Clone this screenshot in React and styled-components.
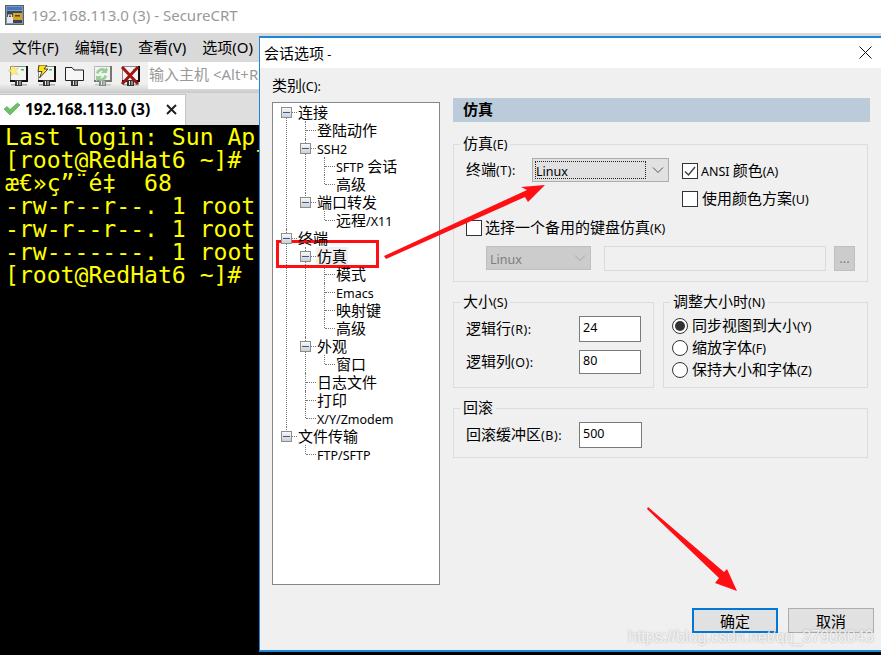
import React from 'react';
import styled, { createGlobalStyle } from 'styled-components';

const GlobalStyle = createGlobalStyle`
    html, body { margin: 0; padding: 0; background: #000; }
    body {
        font-family: "Noto Sans CJK SC", "Noto Sans", sans-serif;
        font-size: 15px;
        color: #000;
    }
    * { box-sizing: border-box; }
`;

const LATIN_FONT = '"Noto Sans", "Open Sans", sans-serif';

const Lat = styled.span`
    font-family: ${LATIN_FONT};
    font-size: 12.5px;
`;

const Screen = styled.div`
    position: relative;
    width: 881px;
    height: 655px;
    overflow: hidden;
    display: flex;
    flex-direction: column;
    background: #000;
`;

/* main window */
const TitleBar = styled.div`
    height: 33px;
    background: #fff;
    display: flex;
    align-items: center;
    gap: 7px;
    padding: 0 0 3px 5px;
    color: #999;
    font-family: ${LATIN_FONT};
    font-size: 15px;
`;

const MenuBar = styled.div`
    height: 29px;
    background: #d9d9d9;
    display: flex;
    align-items: center;
    gap: 16px;
    padding: 0 0 3px 12px;

    ${Lat} { font-size: 15px; }
`;

const ToolBar = styled.div`
    height: 31px;
    background: linear-gradient(#f0f0f0, #f0f0f0 70%, #c9c9c9);
    display: flex;
    align-items: flex-start;
    padding: 3px 0 0 8px;
    gap: 7px;
`;

const HostInput = styled.div`
    margin-left: 0;
    margin-top: -3px;
    width: 115px;
    height: 27px;
    background: #fff;
    color: #999;
    white-space: nowrap;
    overflow: hidden;
    line-height: 24px;
    padding-left: 1px;

    ${Lat} { font-size: 15px; }
`;

const TabStrip = styled.div`
    height: 32px;
    background: #dedede;
    display: flex;
    align-items: flex-end;
`;

const Tab = styled.div`
    width: 186px;
    height: 31px;
    background: #fff;
    border: 1px solid #c4c4c4;
    border-left: 0;
    border-bottom: 0;
    display: flex;
    align-items: center;
    padding: 0 8px 2px 3px;
    gap: 4px;
    font-family: ${LATIN_FONT};
    font-weight: 700;
    font-size: 15.5px;
`;

const TabLabel = styled.span`
    flex: 1;
    white-space: nowrap;
`;

const Terminal = styled.pre`
    flex: 1;
    margin: 0;
    padding: 1px 0 0 5px;
    background: #000;
    color: #ffff00;
    font-family: "DejaVu Sans Mono", monospace;
    font-size: 23.1px;
    line-height: 23px;
    overflow: hidden;
`;

/* dialog */
const Dialog = styled.div`
    position: absolute;
    left: 259px;
    top: 36px;
    width: 622px;
    height: 616px;
    background: #f0f0f0;
    border: 1px solid #1e86d6;
    border-right: 0;
    border-top-width: 2px;
    border-bottom-width: 2px;
    display: flex;
    flex-direction: column;
`;

const DialogTitle = styled.div`
    height: 30px;
    flex: none;
    background: #fff;
    display: flex;
    align-items: center;
    justify-content: space-between;
    padding: 0 9px 2px 4px;
`;

const DialogBody = styled.div`
    display: flex;
    gap: 13px;
    padding-left: 12px;
`;

const LeftColumn = styled.div`
    width: 168px;
    padding-top: 7px;
`;

const CategoryLabel = styled.div`
    height: 27px;
    line-height: 20px;
`;

const TreeBox = styled.div`
    height: 483px;
    background: #fff;
    border: 1px solid #828790;
    padding: 0 0 0 13px;
`;

const TreeList = styled.ul`
    list-style: none;
    margin: 0 0 0 ${p => (p.$root ? '0' : '7px')};
    padding: 0;
`;

const TreeItem = styled.li`
    position: relative;
    padding-left: 12px;

    &::before {
        content: '';
        position: absolute;
        left: 0;
        top: ${p => (p.$first ? '9px' : '0')};
        bottom: 0;
        border-left: 1px dotted #777;
    }
    &:last-child::before {
        bottom: auto;
        height: ${p => (p.$first ? '0' : '9px')};
    }
    &::after {
        content: '';
        position: absolute;
        left: 1px;
        top: 9px;
        width: 10px;
        border-top: 1px dotted #777;
    }
`;

const TreeLabel = styled.div`
    height: 18px;
    line-height: 18px;
    white-space: nowrap;
    position: relative;
    z-index: 1;
`;

const Selected = styled.span`
    display: inline-block;
    background: #f0f0f0;
    margin-left: -1px;
    padding: 0 1px;
`;

const Expander = styled.span`
    position: absolute;
    z-index: 2;
    left: -5px;
    top: 4px;
    width: 11px;
    height: 11px;
    border: 1px solid #8d8d8d;
    background: linear-gradient(#f8f8f8, #cfcfcf);

    &::after {
        content: '';
        position: absolute;
        left: 1px;
        right: 1px;
        top: 4px;
        height: 1px;
        background: #2f5aa8;
    }
`;

const RightColumn = styled.div`
    width: 417px;
    padding-top: 30px;
`;

const PanelHeader = styled.div`
    height: 24px;
    background: #bccbd9;
    line-height: 22px;
    padding-left: 10px;
    font-weight: 700;
    margin-bottom: 12px;
`;

const Group = styled.fieldset`
    margin: 0 0 10px;
    width: ${p => p.$width || '415px'};
    height: ${p => p.$height};
    min-width: 0;
    border: 1px solid #dcdcdc;
    padding: 0 ${p => p.$inset}px;

    legend {
        height: 20px;
        line-height: 18px;
        padding: 0 3px;
        margin-left: ${p => 6 - p.$inset}px;
    }
`;

const GroupPair = styled.div`
    display: flex;
    gap: 9px;
`;

const TerminalRow = styled.div`
    display: flex;
    padding-top: 4px;
`;

const FieldLabel = styled.div`
    width: ${p => p.$width}px;
    height: ${p => p.$height || 24}px;
    flex: none;
    line-height: ${p => (p.$height || 24) - 2}px;
    white-space: nowrap;

    ${Lat} { letter-spacing: 0.5px; }
`;

const Select = styled.div`
    position: relative;
    width: ${p => p.$width}px;
    height: 24px;
    flex: none;
    background: ${p => (p.$disabled ? '#cccccc' : '#e1e1e1')};
    border: 1px solid ${p => (p.$disabled ? '#bfbfbf' : '#adadad')};
    color: ${p => (p.$disabled ? '#7d7d7d' : '#000')};
    line-height: 21px;
    padding-left: 3px;

    svg {
        position: absolute;
        right: 4px;
        top: 6px;
    }
`;

const FocusRing = styled.div`
    width: 111px;
    height: 18px;
    margin: 2px 0 0 -1px;
    border: 1px dotted #222;
    line-height: 15px;
`;

const CheckColumn = styled.div`
    margin-left: 13px;
    display: flex;
    flex-direction: column;
    margin-top: -1px;
`;

const CheckRow = styled.div`
    display: flex;
    align-items: center;
    height: ${p => p.$height || 28}px;
    gap: ${p => p.$gap || 4}px;
    line-height: 20px;
`;

const CheckBox = styled.span`
    width: 16px;
    height: 16px;
    flex: none;
    background: #fff;
    border: 1px solid #333;
    display: flex;
    align-items: center;
    justify-content: center;
`;

const Radio = styled.span`
    width: 16px;
    height: 16px;
    flex: none;
    border-radius: 50%;
    background: #fff;
    border: 1px solid #333;
    display: flex;
    align-items: center;
    justify-content: center;

    &::after {
        content: '';
        width: 10px;
        height: 10px;
        border-radius: 50%;
        background: ${p => (p.$on ? '#333' : 'transparent')};
    }
`;

const AltRow = styled.div`
    display: flex;
    align-items: flex-start;
    margin: 3px 0 0 20px;
`;

const AltInput = styled.div`
    width: 222px;
    height: 25px;
    margin-left: 13px;
    background: #f0f0f0;
    border: 1px solid #dadada;
`;

const DotsButton = styled.div`
    width: 21px;
    height: 25px;
    margin-left: 8px;
    background: #cccccc;
    border: 1px solid #bfbfbf;
    color: #7d7d7d;
    text-align: center;
    line-height: 22px;
    font-family: ${LATIN_FONT};
    font-size: 13px;
`;

const FieldRow = styled.div`
    display: flex;
    align-items: flex-start;
    margin-top: ${p => p.$top}px;
`;

const NumberBox = styled.div`
    width: 63px;
    height: ${p => p.$height}px;
    background: #fff;
    border: 1px solid #7a7a7a;
    padding-left: 3px;
    line-height: ${p => p.$height - 4}px;
    font-family: ${LATIN_FONT};
    font-size: 12.5px;
`;

const RadioColumn = styled.div`
    padding-top: 3px;
`;

const Footer = styled.div`
    display: flex;
    justify-content: flex-end;
    gap: 10px;
    padding: 23px 7px 0 0;
`;

const Button = styled.div`
    width: 86px;
    height: 25px;
    background: #e1e1e1;
    border: ${p => (p.$primary ? '2px solid #0078d7' : '1px solid #adadad')};
    display: flex;
    align-items: center;
    justify-content: center;
`;

/* annotations drawn on top of the screenshot */
const RedBox = styled.div`
    position: absolute;
    left: 276px;
    top: 240px;
    width: 103px;
    height: 28px;
    border: 3px solid #ff0f14;
`;

const Arrows = styled.svg`
    position: absolute;
    left: 0;
    top: 0;
    pointer-events: none;
`;

const Watermark = styled.div`
    position: absolute;
    left: 628px;
    top: 626px;
    color: rgba(255, 255, 255, 0.8);
    text-shadow: 0 0 2px rgba(110, 110, 110, 0.55);
    font-family: "Liberation Sans", sans-serif;
    font-size: 16px;
    line-height: 22px;
    white-space: nowrap;
`;

// latin runs are smaller than the chinese ones, same as the windows font fallback
const T = ({ children }) =>
    children.split(/([\x00-\x7f]+)/).filter(Boolean).map((part, i) =>
        /^[\x00-\x7f]+$/.test(part) ? <Lat key={i}>{part}</Lat> : <span key={i}>{part}</span>
    );

const tree = [
    { label: '连接', children: [
        { label: '登陆动作' },
        { label: 'SSH2', children: [{ label: 'SFTP 会话' }, { label: '高级' }] },
        { label: '端口转发', children: [{ label: '远程/X11' }] },
    ] },
    { label: '终端', children: [
        { label: '仿真', selected: true, children: [
            { label: '模式' }, { label: 'Emacs' }, { label: '映射键' }, { label: '高级' },
        ] },
        { label: '外观', children: [{ label: '窗口' }] },
        { label: '日志文件' },
        { label: '打印' },
        { label: 'X/Y/Zmodem' },
    ] },
    { label: '文件传输', children: [{ label: 'FTP/SFTP' }] },
];

const TreeNodes = ({ nodes, root }) => (
    <TreeList $root={root}>
        {nodes.map((node, i) => (
            <TreeItem key={node.label + i} $first={root && i === 0}>
                {node.children && <Expander />}
                <TreeLabel>
                    {node.selected ? <Selected><T>{node.label}</T></Selected> : <T>{node.label}</T>}
                </TreeLabel>
                {node.children && <TreeNodes nodes={node.children} />}
            </TreeItem>
        ))}
    </TreeList>
);

const Chevron = ({ color }) => (
    <svg width="12" height="10" viewBox="0 0 12 10">
        <path d="M1 2.5 L6 7.5 L11 2.5" fill="none" stroke={color} strokeWidth="1" />
    </svg>
);

const Check = () => (
    <svg width="14" height="14" viewBox="0 0 14 14">
        <path d="M2 7.5 L5.5 11 L12 3" fill="none" stroke="#444" strokeWidth="1.5" />
    </svg>
);

const AppIcon = () => (
    <svg width="19" height="20" viewBox="0 0 19 20">
        <rect x="0.5" y="0.5" width="18" height="19" fill="#8a97a8" stroke="#56616e" />
        <rect x="2" y="2" width="15" height="3" fill="#3f78c9" />
        <rect x="2" y="6" width="15" height="12" fill="#3d4550" />
        <rect x="8" y="8" width="9" height="7" fill="#d9a521" />
        <rect x="10" y="10" width="5" height="1.5" fill="#3d4550" />
        <rect x="2" y="12" width="6" height="6" fill="#e6e6e6" />
        <path d="M3.5 12 V10 H6.5 V12" fill="none" stroke="#e6e6e6" strokeWidth="1.2" />
    </svg>
);

// the computer shape shared by the toolbar buttons
const Computer = ({ faded, children }) => (
    <svg width="21" height="22" viewBox="0 0 21 22" style={{ opacity: faded ? 0.55 : 1 }}>
        <rect x="2" y="1" width="17" height="15" fill="#f4f4f4" />
        <path d="M2.5 15 V1.5 H18" fill="none" stroke="#8a8a8a" />
        <path d="M19 1 V16 H13 M8 16 H2" fill="none" stroke="#111" strokeWidth="2" />
        <rect x="13" y="4" width="3" height="1.5" fill="#35d04a" />
        <rect x="7" y="15" width="7" height="6" fill="#333" />
        <rect x="9" y="16" width="1" height="4" fill="#e8e8e8" />
        <rect x="11.5" y="16" width="1" height="4" fill="#e8e8e8" />
        <rect x="3" y="19" width="4" height="1.5" fill="#aaa" />
        <rect x="14" y="19" width="5" height="1.5" fill="#aaa" />
        {children}
    </svg>
);

const FolderIcon = () => (
    <svg width="21" height="22" viewBox="0 0 21 22">
        <path d="M1.5 15.5 V2.5 H8 L10 5 H19.5 V15.5 Z" fill="#f6f6f6" stroke="#222" />
        <rect x="7" y="15" width="7" height="6" fill="#333" />
        <rect x="9" y="16" width="1" height="4" fill="#e8e8e8" />
        <rect x="11.5" y="16" width="1" height="4" fill="#e8e8e8" />
    </svg>
);

const TabCheck = () => (
    <svg width="18" height="14" viewBox="0 0 18 14">
        <path d="M1 7 L4 4.5 L7 7.5 L14.5 1 L17 3 L7 13 Z" fill="#6fbf6a" stroke="#4f9f4d" strokeWidth="0.6" />
    </svg>
);

const TabClose = () => (
    <svg width="11" height="11" viewBox="0 0 11 11">
        <path d="M1 1 L10 10 M10 1 L1 10" stroke="#222" strokeWidth="2" />
    </svg>
);

const DialogClose = () => (
    <svg width="13" height="13" viewBox="0 0 13 13">
        <path d="M0.5 0.5 L12.5 12.5 M12.5 0.5 L0.5 12.5" stroke="#111" strokeWidth="1" />
    </svg>
);

const App = () => (
    <Screen>
        <GlobalStyle />
        <TitleBar>
            <AppIcon />
            <span>192.168.113.0 (3) - SecureCRT</span>
        </TitleBar>
        <MenuBar>
            <span><T>文件(F)</T></span>
            <span><T>编辑(E)</T></span>
            <span><T>查看(V)</T></span>
            <span><T>选项(O)</T></span>
        </MenuBar>
        <ToolBar>
            <Computer>
                <path d="M5 0 L6.5 4 L10.5 3 L7.5 6 L10 10 L6 8 L3 11 L3.5 7 L0 5.5 L4 4.5 Z" fill="#fff27a" stroke="#d8c840" strokeWidth="0.5" />
            </Computer>
            <Computer>
                <path d="M3 0 H11 L8 4 H12 L3.5 13 L6 6.5 H2 Z" fill="#ffe11a" stroke="#222" strokeWidth="0.8" />
            </Computer>
            <FolderIcon />
            <Computer faded>
                <path d="M4 8 A6 6 0 0 1 13 4 L15 2 V8 H9 L11 6 A3.5 3.5 0 0 0 6.5 9 Z" fill="#4fb34f" />
                <path d="M15 11 A6 6 0 0 1 6 15 L4 17 V11 H10 L8 13 A3.5 3.5 0 0 0 12.5 10 Z" fill="#4fb34f" />
            </Computer>
            <Computer>
                <path d="M2 2 L18 19 M18 2 L2 19" stroke="#a01414" strokeWidth="3" />
            </Computer>
            <HostInput><T>输入主机 &lt;Alt+R&gt;</T></HostInput>
        </ToolBar>
        <TabStrip>
            <Tab>
                <TabCheck />
                <TabLabel>192.168.113.0 (3)</TabLabel>
                <TabClose />
            </Tab>
        </TabStrip>
        <Terminal>{[
            'Last login: Sun Ap',
            '[root@RedHat6 ~]# ll',
            '\u00e6\u20ac\u00bb\u00e7\u201d\u00a8\u00e9\u2021  68',
            '-rw-r--r--. 1 root',
            '-rw-r--r--. 1 root',
            '-rw-------. 1 root',
            '[root@RedHat6 ~]#',
        ].join('\n')}</Terminal>

        <Dialog>
            <DialogTitle>
                <span><T>会话选项 -</T></span>
                <DialogClose />
            </DialogTitle>
            <DialogBody>
                <LeftColumn>
                    <CategoryLabel><T>类别(C):</T></CategoryLabel>
                    <TreeBox>
                        <TreeNodes nodes={tree} root />
                    </TreeBox>
                </LeftColumn>
                <RightColumn>
                    <PanelHeader>仿真</PanelHeader>
                    <Group $inset={12} $height="148px">
                        <legend><T>仿真(E)</T></legend>
                        <TerminalRow>
                            <FieldLabel $width={66}><T>终端(T):</T></FieldLabel>
                            <Select $width={137}>
                                <FocusRing><Lat>Linux</Lat></FocusRing>
                                <Chevron color="#555" />
                            </Select>
                            <CheckColumn>
                                <CheckRow $gap={3}><CheckBox><Check /></CheckBox><span><T>ANSI 颜色(A)</T></span></CheckRow>
                                <CheckRow><CheckBox /><span><T>使用颜色方案(U)</T></span></CheckRow>
                            </CheckColumn>
                        </TerminalRow>
                        <CheckRow $height={30} $gap={3}>
                            <CheckBox /><span><T>选择一个备用的键盘仿真(K)</T></span>
                        </CheckRow>
                        <AltRow>
                            <Select $width={105} $disabled>
                                <Lat>Linux</Lat>
                                <Chevron color="#a8a8a8" />
                            </Select>
                            <AltInput />
                            <DotsButton>...</DotsButton>
                        </AltRow>
                    </Group>
                    <GroupPair>
                        <Group $inset={12} $width="201px" $height="96px">
                            <legend><T>大小(S)</T></legend>
                            <FieldRow $top={4}>
                                <FieldLabel $width={113} $height={26}><T>逻辑行(R):</T></FieldLabel>
                                <NumberBox $height={26}>24</NumberBox>
                            </FieldRow>
                            <FieldRow $top={8}>
                                <FieldLabel $width={113}><T>逻辑列(O):</T></FieldLabel>
                                <NumberBox $height={24}>80</NumberBox>
                            </FieldRow>
                        </Group>
                        <Group $inset={8} $width="205px" $height="96px">
                            <legend><T>调整大小时(N)</T></legend>
                            <RadioColumn>
                                <CheckRow $height={22}><Radio $on /><span><T>同步视图到大小(Y)</T></span></CheckRow>
                                <CheckRow $height={22}><Radio /><span><T>缩放字体(F)</T></span></CheckRow>
                                <CheckRow $height={22}><Radio /><span><T>保持大小和字体(Z)</T></span></CheckRow>
                            </RadioColumn>
                        </Group>
                    </GroupPair>
                    <Group $inset={12} $height="60px">
                        <legend>回滚</legend>
                        <FieldRow $top={4}>
                            <FieldLabel $width={113} $height={26}><T>回滚缓冲区(B):</T></FieldLabel>
                            <NumberBox $height={26}>500</NumberBox>
                        </FieldRow>
                    </Group>
                </RightColumn>
            </DialogBody>
            <Footer>
                <Button $primary>确定</Button>
                <Button>取消</Button>
            </Footer>
        </Dialog>

        <RedBox />
        <Arrows width="881" height="655" viewBox="0 0 881 655">
            <polygon points="384,256 527,190 521,187 545,185 528,202 525,197 386,259" fill="#ff0f14" />
            <polygon points="648,507 724,572 727,569 737,591 715,583 719,578 647,509" fill="#ff0f14" />
        </Arrows>
        <Watermark>https://blog.csdn.net/qq_37908043</Watermark>
    </Screen>
);

export default App;
